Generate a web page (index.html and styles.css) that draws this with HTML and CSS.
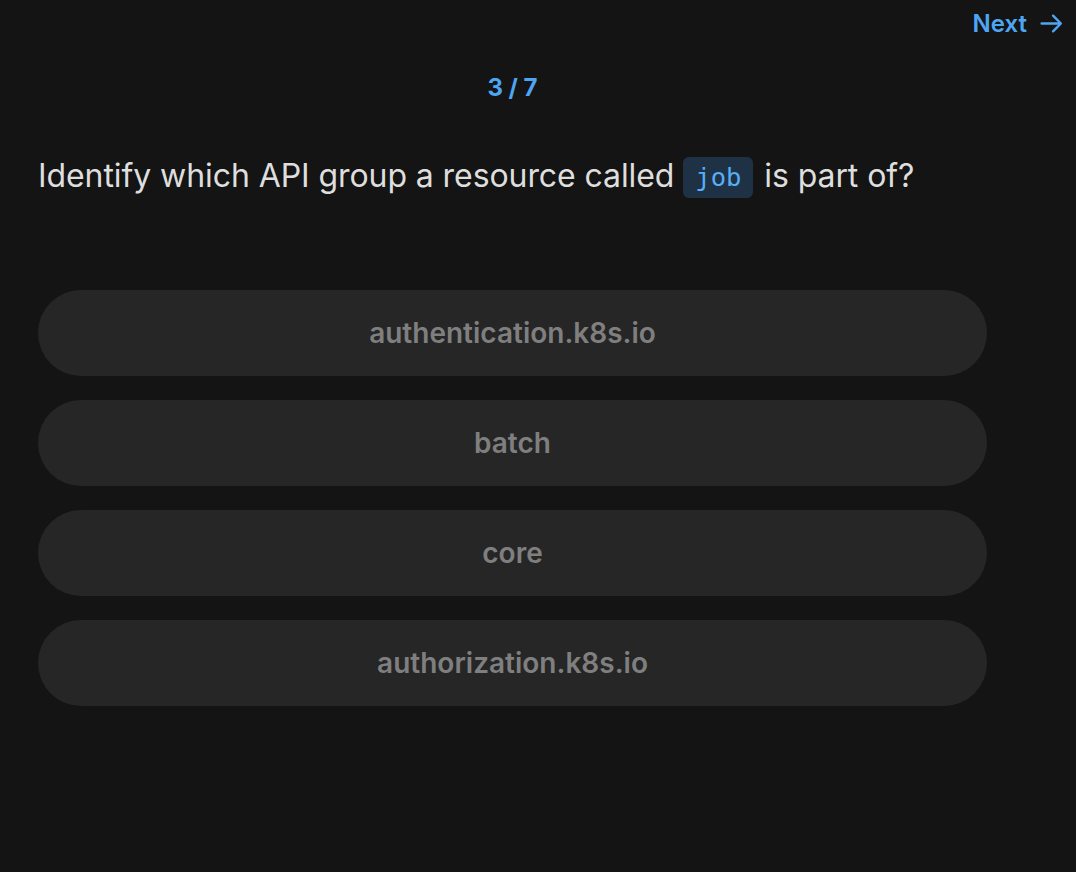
FILE: index.html
```html
<!DOCTYPE html>
<html lang="en">
<head>
<meta charset="utf-8">
<title>Quiz</title>
<link rel="stylesheet" href="styles.css">
</head>
<body>
  <header class="topbar">
    <a class="next" href="#">Next
      <svg class="next-icon" viewBox="0 0 24 24" width="25" height="25" aria-hidden="true">
        <path d="M2.5 12h18M13.5 4.5l7.5 7.5-7.5 7.5" fill="none" stroke="currentColor" stroke-width="2.3" stroke-linecap="round" stroke-linejoin="round"/>
      </svg>
    </a>
  </header>
  <main class="quiz">
    <div class="progress">3 / 7</div>
    <h1 class="question">Identify which API group a resource called <code class="code">job</code> is part of?</h1>
    <div class="options">
      <button class="option">authentication.k8s.io</button>
      <button class="option">batch</button>
      <button class="option">core</button>
      <button class="option">authorization.k8s.io</button>
    </div>
  </main>
</body>
</html>
```

FILE: styles.css
```css
html, body {
  margin: 0;
  padding: 0;
  background: #141414;
  font-family: Inter, "Noto Sans", sans-serif;
  height: 100%;
}

.topbar {
  display: flex;
  justify-content: flex-end;
  padding: 7px 12px 0 0;
  height: 33px;
}

.next {
  display: flex;
  align-items: center;
  gap: 12px;
  color: #4ea6f2;
  font-size: 24px;
  font-weight: 600;
  text-decoration: none;
}

.next-icon {
  display: block;
}

.quiz {
  width: 949px;
  padding: 0 38px;
}

.progress {
  text-align: center;
  color: #4ea6f2;
  font-size: 24px;
  font-weight: 700;
  margin-top: 33px;
  line-height: 30px;
}

.question {
  margin: 52px 0 0;
  color: #dedede;
  font-size: 32px;
  font-weight: 400;
  line-height: 42px;
  letter-spacing: -0.08px;
}

.code {
  display: inline-block;
  vertical-align: 1px;
  font-family: "DejaVu Sans Mono", monospace;
  font-size: 25.5px;
  line-height: 29px;
  letter-spacing: 0;
  color: #56aef5;
  background: #1f3245;
  border-radius: 6px;
  padding: 6px 12px;
  margin: 0 2px 0 0;
}

.options {
  display: flex;
  flex-direction: column;
  gap: 24px;
  margin-top: 92px;
}

.option {
  height: 86px;
  border: none;
  border-radius: 43px;
  background: #262626;
  color: #7f7f7f;
  font-family: Inter, "Noto Sans", sans-serif;
  font-size: 28px;
  font-weight: 600;
  cursor: pointer;
}
```
